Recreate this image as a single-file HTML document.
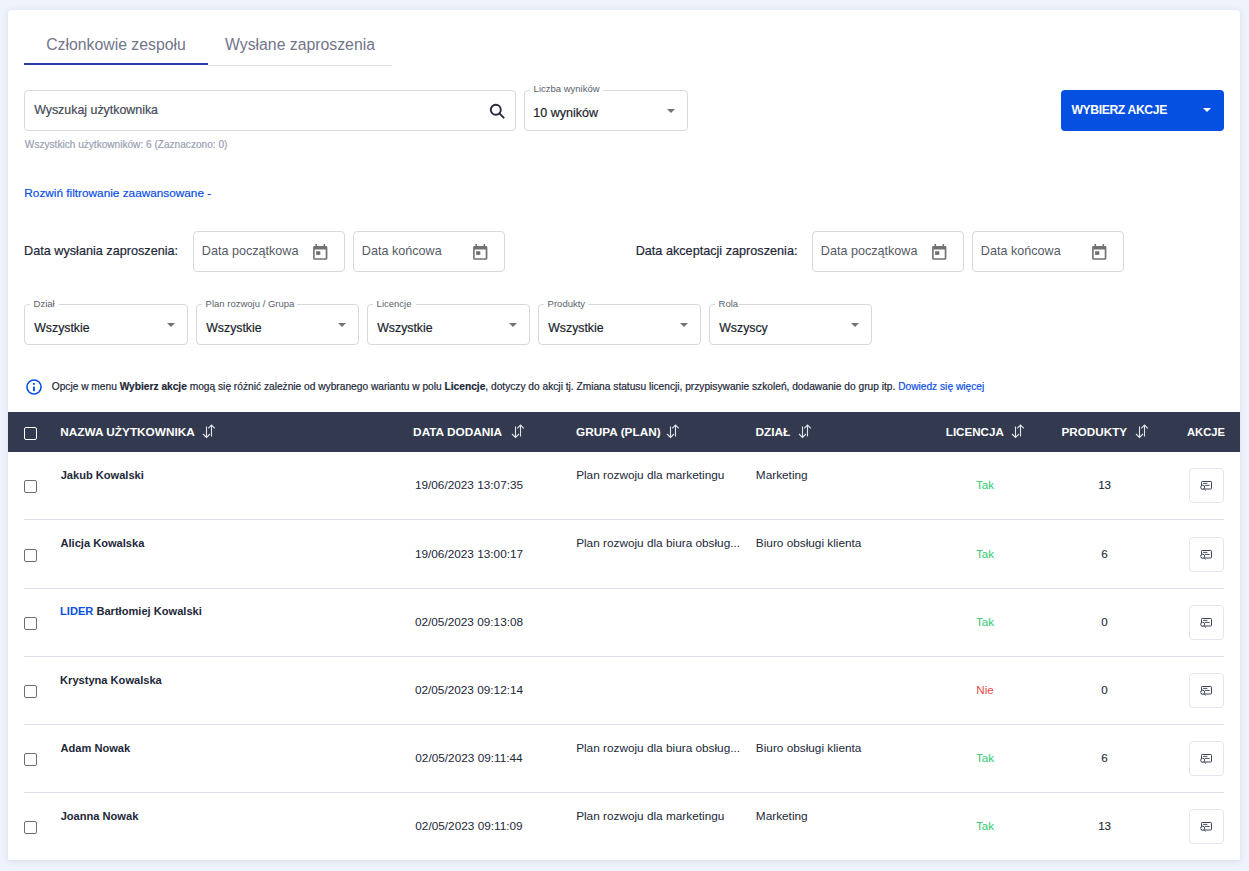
<!DOCTYPE html>
<html><head><meta charset="utf-8"><title>Członkowie zespołu</title>
<style>
html,body{margin:0;padding:0;}
body{width:1249px;height:871px;position:relative;overflow:hidden;background:#eff3fc;font-family:"Liberation Sans",sans-serif;}
.t{position:absolute;white-space:nowrap;line-height:1;}
.m{-webkit-text-stroke:0.2px currentColor;}
b{font-weight:700;}
</style></head><body>
<div style="position:absolute;left:8px;top:10px;width:1232px;height:850px;background:#fff;border-radius:4px 4px 0 0;box-shadow:0 1px 7px rgba(60,70,130,0.13);"></div>
<div class="t" style="left:24px;width:184px;text-align:center;top:37px;font-size:15.8px;font-weight:400;color:#72768a;">Członkowie zespołu</div>
<div class="t" style="left:208px;width:184px;text-align:center;top:37px;font-size:15.8px;font-weight:400;color:#72768a;">Wysłane zaproszenia</div>
<div style="position:absolute;left:208px;top:65px;width:184px;height:1px;background:#dedede;"></div>
<div style="position:absolute;left:24px;top:63px;width:184px;height:2px;background:#283aaf;"></div>
<div style="position:absolute;left:24px;top:90px;width:492px;height:41px;box-sizing:border-box;border:1px solid #d9d9d9;border-radius:4px;"></div>
<div class="t m" style="left:34.15px;top:104px;font-size:12.4px;font-weight:400;color:#464b58;">Wyszukaj użytkownika</div>
<svg style="position:absolute;left:489px;top:103px" width="16" height="16" viewBox="0 0 16 16"><circle cx="6.8" cy="6.8" r="5" fill="none" stroke="#262c3d" stroke-width="1.9"/><line x1="10.4" y1="10.4" x2="14.6" y2="14.6" stroke="#262c3d" stroke-width="2" stroke-linecap="round"/></svg>
<div class="t m" style="left:24.86px;top:140px;font-size:10.1px;font-weight:400;color:#9a9fb3;">Wszystkich użytkowników: 6 (Zaznaczono: 0)</div>
<div style="position:absolute;left:524px;top:90px;width:164px;height:41px;box-sizing:border-box;border:1px solid #d9d9d9;border-radius:4px;"></div>
<div style="position:absolute;left:530px;top:88px;width:73px;height:4px;background:#fff;"></div>
<div class="t" style="left:533.62px;top:84px;font-size:9.5px;font-weight:400;color:#5a5f6c;">Liczba wyników</div>
<div class="t m" style="left:533.35px;top:107px;font-size:12.5px;font-weight:400;color:#1b1f2c;">10 wyników</div>
<div style="position:absolute;left:667px;top:109px;width:0;height:0;border-left:4px solid transparent;border-right:4px solid transparent;border-top:4px solid #737373;"></div>
<div style="position:absolute;left:1061px;top:90px;width:163px;height:41px;background:#0550e0;border-radius:4px;"></div>
<div class="t" style="left:1071.39px;top:104px;font-size:12.2px;font-weight:700;color:#fff;letter-spacing:-0.38px;">WYBIERZ AKCJE</div>
<div style="position:absolute;left:1203px;top:108px;width:0;height:0;border-left:4px solid transparent;border-right:4px solid transparent;border-top:4px solid #fff;"></div>
<div class="t m" style="left:24.33px;top:188px;font-size:11.8px;font-weight:400;color:#0a4fe6;">Rozwiń filtrowanie zaawansowane -</div>
<div class="t m" style="left:24.06px;top:245px;font-size:12.66px;font-weight:400;color:#222838;">Data wysłania zaproszenia:</div>
<div style="position:absolute;left:193px;top:231px;width:152px;height:41px;box-sizing:border-box;border:1px solid #d9d9d9;border-radius:4px;"></div>
<div class="t" style="left:201.87px;top:245px;font-size:12.6px;font-weight:400;color:#565a64;">Data początkowa</div>
<svg style="position:absolute;left:312.9px;top:243.8px" width="15" height="16" viewBox="0 0 15 16"><path fill="#727272" fill-rule="evenodd" d="M1.5 2H13a1.4 1.4 0 0 1 1.4 1.4V14.4A1.4 1.4 0 0 1 13 15.8H1.5A1.4 1.4 0 0 1 0.1 14.4V3.4A1.4 1.4 0 0 1 1.5 2ZM1.7 5.6V14.2H12.7V5.6Z"/><rect x="2.5" y="0" width="1.5" height="2.6" fill="#727272"/><rect x="10.6" y="0" width="1.5" height="2.6" fill="#727272"/><rect x="3.1" y="7.2" width="4.2" height="3.7" fill="#727272"/></svg>
<div style="position:absolute;left:353px;top:231px;width:152px;height:41px;box-sizing:border-box;border:1px solid #d9d9d9;border-radius:4px;"></div>
<div class="t" style="left:361.87px;top:245px;font-size:12.6px;font-weight:400;color:#565a64;">Data końcowa</div>
<svg style="position:absolute;left:472.9px;top:243.8px" width="15" height="16" viewBox="0 0 15 16"><path fill="#727272" fill-rule="evenodd" d="M1.5 2H13a1.4 1.4 0 0 1 1.4 1.4V14.4A1.4 1.4 0 0 1 13 15.8H1.5A1.4 1.4 0 0 1 0.1 14.4V3.4A1.4 1.4 0 0 1 1.5 2ZM1.7 5.6V14.2H12.7V5.6Z"/><rect x="2.5" y="0" width="1.5" height="2.6" fill="#727272"/><rect x="10.6" y="0" width="1.5" height="2.6" fill="#727272"/><rect x="3.1" y="7.2" width="4.2" height="3.7" fill="#727272"/></svg>
<div class="t m" style="left:635.66px;top:245px;font-size:12.66px;font-weight:400;color:#222838;">Data akceptacji zaproszenia:</div>
<div style="position:absolute;left:812px;top:231px;width:152px;height:41px;box-sizing:border-box;border:1px solid #d9d9d9;border-radius:4px;"></div>
<div class="t" style="left:820.87px;top:245px;font-size:12.6px;font-weight:400;color:#565a64;">Data początkowa</div>
<svg style="position:absolute;left:931.9px;top:243.8px" width="15" height="16" viewBox="0 0 15 16"><path fill="#727272" fill-rule="evenodd" d="M1.5 2H13a1.4 1.4 0 0 1 1.4 1.4V14.4A1.4 1.4 0 0 1 13 15.8H1.5A1.4 1.4 0 0 1 0.1 14.4V3.4A1.4 1.4 0 0 1 1.5 2ZM1.7 5.6V14.2H12.7V5.6Z"/><rect x="2.5" y="0" width="1.5" height="2.6" fill="#727272"/><rect x="10.6" y="0" width="1.5" height="2.6" fill="#727272"/><rect x="3.1" y="7.2" width="4.2" height="3.7" fill="#727272"/></svg>
<div style="position:absolute;left:972px;top:231px;width:152px;height:41px;box-sizing:border-box;border:1px solid #d9d9d9;border-radius:4px;"></div>
<div class="t" style="left:980.87px;top:245px;font-size:12.6px;font-weight:400;color:#565a64;">Data końcowa</div>
<svg style="position:absolute;left:1091.9px;top:243.8px" width="15" height="16" viewBox="0 0 15 16"><path fill="#727272" fill-rule="evenodd" d="M1.5 2H13a1.4 1.4 0 0 1 1.4 1.4V14.4A1.4 1.4 0 0 1 13 15.8H1.5A1.4 1.4 0 0 1 0.1 14.4V3.4A1.4 1.4 0 0 1 1.5 2ZM1.7 5.6V14.2H12.7V5.6Z"/><rect x="2.5" y="0" width="1.5" height="2.6" fill="#727272"/><rect x="10.6" y="0" width="1.5" height="2.6" fill="#727272"/><rect x="3.1" y="7.2" width="4.2" height="3.7" fill="#727272"/></svg>
<div style="position:absolute;left:24px;top:304px;width:164px;height:41px;box-sizing:border-box;border:1px solid #d9d9d9;border-radius:4px;"></div>
<div style="position:absolute;left:30px;top:302px;width:29px;height:4px;background:#fff;"></div>
<div class="t" style="left:33.62px;top:299px;font-size:9.5px;font-weight:400;color:#5a5f6c;">Dział</div>
<div class="t m" style="left:34.25px;top:322px;font-size:12.3px;font-weight:400;color:#1b1f2c;">Wszystkie</div>
<div style="position:absolute;left:167px;top:323px;width:0;height:0;border-left:4px solid transparent;border-right:4px solid transparent;border-top:4px solid #737373;"></div>
<div style="position:absolute;left:196px;top:304px;width:163px;height:41px;box-sizing:border-box;border:1px solid #d9d9d9;border-radius:4px;"></div>
<div style="position:absolute;left:202px;top:302px;width:95px;height:4px;background:#fff;"></div>
<div class="t" style="left:205.62px;top:299px;font-size:9.5px;font-weight:400;color:#5a5f6c;">Plan rozwoju / Grupa</div>
<div class="t m" style="left:206.25px;top:322px;font-size:12.3px;font-weight:400;color:#1b1f2c;">Wszystkie</div>
<div style="position:absolute;left:338px;top:323px;width:0;height:0;border-left:4px solid transparent;border-right:4px solid transparent;border-top:4px solid #737373;"></div>
<div style="position:absolute;left:367px;top:304px;width:163px;height:41px;box-sizing:border-box;border:1px solid #d9d9d9;border-radius:4px;"></div>
<div style="position:absolute;left:373px;top:302px;width:43px;height:4px;background:#fff;"></div>
<div class="t" style="left:376.62px;top:299px;font-size:9.5px;font-weight:400;color:#5a5f6c;">Licencje</div>
<div class="t m" style="left:377.25px;top:322px;font-size:12.3px;font-weight:400;color:#1b1f2c;">Wszystkie</div>
<div style="position:absolute;left:509px;top:323px;width:0;height:0;border-left:4px solid transparent;border-right:4px solid transparent;border-top:4px solid #737373;"></div>
<div style="position:absolute;left:538px;top:304px;width:163px;height:41px;box-sizing:border-box;border:1px solid #d9d9d9;border-radius:4px;"></div>
<div style="position:absolute;left:544px;top:302px;width:44px;height:4px;background:#fff;"></div>
<div class="t" style="left:547.62px;top:299px;font-size:9.5px;font-weight:400;color:#5a5f6c;">Produkty</div>
<div class="t m" style="left:548.25px;top:322px;font-size:12.3px;font-weight:400;color:#1b1f2c;">Wszystkie</div>
<div style="position:absolute;left:680px;top:323px;width:0;height:0;border-left:4px solid transparent;border-right:4px solid transparent;border-top:4px solid #737373;"></div>
<div style="position:absolute;left:709px;top:304px;width:163px;height:41px;box-sizing:border-box;border:1px solid #d9d9d9;border-radius:4px;"></div>
<div style="position:absolute;left:715px;top:302px;width:24px;height:4px;background:#fff;"></div>
<div class="t" style="left:718.62px;top:299px;font-size:9.5px;font-weight:400;color:#5a5f6c;">Rola</div>
<div class="t m" style="left:719.25px;top:322px;font-size:12.3px;font-weight:400;color:#1b1f2c;">Wszyscy</div>
<div style="position:absolute;left:851px;top:323px;width:0;height:0;border-left:4px solid transparent;border-right:4px solid transparent;border-top:4px solid #737373;"></div>
<svg style="position:absolute;left:26.1px;top:378.7px" width="16" height="16" viewBox="0 0 16 16"><circle cx="8" cy="8" r="7.05" fill="none" stroke="#0a4fe6" stroke-width="1.6"/><rect x="7" y="4.05" width="1.9" height="1.7" fill="#0a4fe6"/><rect x="7" y="7.65" width="1.9" height="4.5" fill="#0a4fe6"/></svg>
<div class="t m" style="left:51.72px;top:382px;font-size:10.2px;font-weight:400;color:#222838;">Opcje w menu <b>Wybierz akcje</b> mogą się różnić zależnie od wybranego wariantu w polu <b>Licencje</b>, dotyczy do akcji tj. Zmiana statusu licencji, przypisywanie szkoleń, dodawanie do grup itp. <span style="color:#0a4fe6">Dowiedz się więcej</span></div>
<div style="position:absolute;left:8px;top:412px;width:1232px;height:40px;background:#333a4f;"></div>
<div style="position:absolute;left:24px;top:426.5px;width:13px;height:13px;box-sizing:border-box;border:1.5px solid #fff;border-radius:2px;"></div>
<div class="t" style="left:60.21px;top:427px;font-size:11.8px;font-weight:700;color:#fff;">NAZWA UŻYTKOWNIKA</div>
<svg style="position:absolute;left:202px;top:424px" width="14" height="15" viewBox="0 0 14 15"><path d="M4.5 2.5V13.5M1 10L4.5 13.5L8 10" fill="none" stroke="#e2e4ea" stroke-width="1.1"/><path d="M9.5 12.6V1.2M6.2 4.4L9.5 1.1L12.8 4.4" fill="none" stroke="#e2e4ea" stroke-width="1.1"/></svg>
<div class="t" style="left:413.11px;top:427px;font-size:11.8px;font-weight:700;color:#fff;">DATA DODANIA</div>
<svg style="position:absolute;left:511px;top:424px" width="14" height="15" viewBox="0 0 14 15"><path d="M4.5 2.5V13.5M1 10L4.5 13.5L8 10" fill="none" stroke="#e2e4ea" stroke-width="1.1"/><path d="M9.5 12.6V1.2M6.2 4.4L9.5 1.1L12.8 4.4" fill="none" stroke="#e2e4ea" stroke-width="1.1"/></svg>
<div class="t" style="left:576.12px;top:427px;font-size:11.8px;font-weight:700;color:#fff;">GRUPA (PLAN)</div>
<svg style="position:absolute;left:666px;top:424px" width="14" height="15" viewBox="0 0 14 15"><path d="M4.5 2.5V13.5M1 10L4.5 13.5L8 10" fill="none" stroke="#e2e4ea" stroke-width="1.1"/><path d="M9.5 12.6V1.2M6.2 4.4L9.5 1.1L12.8 4.4" fill="none" stroke="#e2e4ea" stroke-width="1.1"/></svg>
<div class="t" style="left:755.51px;top:427px;font-size:11.8px;font-weight:700;color:#fff;">DZIAŁ</div>
<svg style="position:absolute;left:798px;top:424px" width="14" height="15" viewBox="0 0 14 15"><path d="M4.5 2.5V13.5M1 10L4.5 13.5L8 10" fill="none" stroke="#e2e4ea" stroke-width="1.1"/><path d="M9.5 12.6V1.2M6.2 4.4L9.5 1.1L12.8 4.4" fill="none" stroke="#e2e4ea" stroke-width="1.1"/></svg>
<div class="t" style="left:945.82px;top:426px;font-size:11.6px;font-weight:700;color:#fff;">LICENCJA</div>
<svg style="position:absolute;left:1011px;top:424px" width="14" height="15" viewBox="0 0 14 15"><path d="M4.5 2.5V13.5M1 10L4.5 13.5L8 10" fill="none" stroke="#e2e4ea" stroke-width="1.1"/><path d="M9.5 12.6V1.2M6.2 4.4L9.5 1.1L12.8 4.4" fill="none" stroke="#e2e4ea" stroke-width="1.1"/></svg>
<div class="t" style="left:1061.52px;top:426px;font-size:11.7px;font-weight:700;color:#fff;">PRODUKTY</div>
<svg style="position:absolute;left:1135px;top:424px" width="14" height="15" viewBox="0 0 14 15"><path d="M4.5 2.5V13.5M1 10L4.5 13.5L8 10" fill="none" stroke="#e2e4ea" stroke-width="1.1"/><path d="M9.5 12.6V1.2M6.2 4.4L9.5 1.1L12.8 4.4" fill="none" stroke="#e2e4ea" stroke-width="1.1"/></svg>
<div class="t" style="left:1187.02px;top:427px;font-size:11.2px;font-weight:700;color:#fff;">AKCJE</div>
<div style="position:absolute;left:24px;top:480px;width:13px;height:13px;box-sizing:border-box;border:1.5px solid #6e6e6e;border-radius:2px;"></div>
<div class="t" style="left:60.63px;top:470px;font-size:11.1px;font-weight:700;color:#222838;">Jakub Kowalski</div>
<div class="t" style="left:395px;width:148px;text-align:center;top:480px;font-size:11.8px;font-weight:400;color:#222838;">19/06/2023 13:07:35</div>
<div class="t" style="left:576.13px;top:470px;font-size:11.8px;font-weight:400;color:#222838;">Plan rozwoju dla marketingu</div>
<div class="t" style="left:755.83px;top:470px;font-size:11.8px;font-weight:400;color:#222838;">Marketing</div>
<div class="t" style="left:935px;width:100px;text-align:center;top:479px;font-size:11.6px;font-weight:400;color:#2ecc71;">Tak</div>
<div class="t" style="left:1054.6px;width:100.0px;text-align:center;top:479px;font-size:11.6px;font-weight:400;color:#222838;-webkit-text-stroke:0.1px currentColor;">13</div>
<div style="position:absolute;left:1189px;top:468px;width:35px;height:35px;box-sizing:border-box;border:1px solid #e3e6f0;border-radius:4px;"></div>
<svg style="position:absolute;left:1199px;top:479px" width="16" height="14" viewBox="0 0 16 14"><rect x="2.5" y="2.5" width="10" height="7.5" rx="0.8" fill="none" stroke="#3b4253" stroke-width="1"/><line x1="4.1" y1="4.4" x2="8.3" y2="4.4" stroke="#3b4253" stroke-width="0.95"/><line x1="6.1" y1="6.4" x2="10.6" y2="6.4" stroke="#3b4253" stroke-width="0.95"/><circle cx="3.7" cy="8.2" r="2" fill="#fff" stroke="#3b4253" stroke-width="1"/><path d="M5.8 10.4L6.5 11.6" stroke="#3b4253" stroke-width="0.9"/></svg>
<div style="position:absolute;left:24px;top:519px;width:1200px;height:1px;background:#dfe1ec;"></div>
<div style="position:absolute;left:24px;top:549px;width:13px;height:13px;box-sizing:border-box;border:1.5px solid #6e6e6e;border-radius:2px;"></div>
<div class="t" style="left:60.52px;top:538px;font-size:11.1px;font-weight:700;color:#222838;">Alicja Kowalska</div>
<div class="t" style="left:395px;width:148px;text-align:center;top:549px;font-size:11.8px;font-weight:400;color:#222838;">19/06/2023 13:00:17</div>
<div class="t" style="left:576.13px;top:538px;font-size:11.8px;font-weight:400;color:#222838;">Plan rozwoju dla biura obsług...</div>
<div class="t" style="left:755.83px;top:538px;font-size:11.8px;font-weight:400;color:#222838;">Biuro obsługi klienta</div>
<div class="t" style="left:935px;width:100px;text-align:center;top:548px;font-size:11.6px;font-weight:400;color:#2ecc71;">Tak</div>
<div class="t" style="left:1054.6px;width:100.0px;text-align:center;top:548px;font-size:11.6px;font-weight:400;color:#222838;-webkit-text-stroke:0.1px currentColor;">6</div>
<div style="position:absolute;left:1189px;top:537px;width:35px;height:35px;box-sizing:border-box;border:1px solid #e3e6f0;border-radius:4px;"></div>
<svg style="position:absolute;left:1199px;top:548px" width="16" height="14" viewBox="0 0 16 14"><rect x="2.5" y="2.5" width="10" height="7.5" rx="0.8" fill="none" stroke="#3b4253" stroke-width="1"/><line x1="4.1" y1="4.4" x2="8.3" y2="4.4" stroke="#3b4253" stroke-width="0.95"/><line x1="6.1" y1="6.4" x2="10.6" y2="6.4" stroke="#3b4253" stroke-width="0.95"/><circle cx="3.7" cy="8.2" r="2" fill="#fff" stroke="#3b4253" stroke-width="1"/><path d="M5.8 10.4L6.5 11.6" stroke="#3b4253" stroke-width="0.9"/></svg>
<div style="position:absolute;left:24px;top:588px;width:1200px;height:1px;background:#dfe1ec;"></div>
<div style="position:absolute;left:24px;top:617px;width:13px;height:13px;box-sizing:border-box;border:1.5px solid #6e6e6e;border-radius:2px;"></div>
<div class="t" style="left:60.06px;top:606px;font-size:11.1px;font-weight:700;color:#222838;"><span style="color:#0a4fe6">LIDER</span> Bartłomiej Kowalski</div>
<div class="t" style="left:395px;width:148px;text-align:center;top:617px;font-size:11.8px;font-weight:400;color:#222838;">02/05/2023 09:13:08</div>
<div class="t" style="left:935px;width:100px;text-align:center;top:616px;font-size:11.6px;font-weight:400;color:#2ecc71;">Tak</div>
<div class="t" style="left:1054.6px;width:100.0px;text-align:center;top:616px;font-size:11.6px;font-weight:400;color:#222838;-webkit-text-stroke:0.1px currentColor;">0</div>
<div style="position:absolute;left:1189px;top:605px;width:35px;height:35px;box-sizing:border-box;border:1px solid #e3e6f0;border-radius:4px;"></div>
<svg style="position:absolute;left:1199px;top:616px" width="16" height="14" viewBox="0 0 16 14"><rect x="2.5" y="2.5" width="10" height="7.5" rx="0.8" fill="none" stroke="#3b4253" stroke-width="1"/><line x1="4.1" y1="4.4" x2="8.3" y2="4.4" stroke="#3b4253" stroke-width="0.95"/><line x1="6.1" y1="6.4" x2="10.6" y2="6.4" stroke="#3b4253" stroke-width="0.95"/><circle cx="3.7" cy="8.2" r="2" fill="#fff" stroke="#3b4253" stroke-width="1"/><path d="M5.8 10.4L6.5 11.6" stroke="#3b4253" stroke-width="0.9"/></svg>
<div style="position:absolute;left:24px;top:656px;width:1200px;height:1px;background:#dfe1ec;"></div>
<div style="position:absolute;left:24px;top:685px;width:13px;height:13px;box-sizing:border-box;border:1.5px solid #6e6e6e;border-radius:2px;"></div>
<div class="t" style="left:60.06px;top:675px;font-size:11.1px;font-weight:700;color:#222838;">Krystyna Kowalska</div>
<div class="t" style="left:395px;width:148px;text-align:center;top:685px;font-size:11.8px;font-weight:400;color:#222838;">02/05/2023 09:12:14</div>
<div class="t" style="left:935px;width:100px;text-align:center;top:684px;font-size:11.6px;font-weight:400;color:#e84a4a;">Nie</div>
<div class="t" style="left:1054.6px;width:100.0px;text-align:center;top:684px;font-size:11.6px;font-weight:400;color:#222838;-webkit-text-stroke:0.1px currentColor;">0</div>
<div style="position:absolute;left:1189px;top:673px;width:35px;height:35px;box-sizing:border-box;border:1px solid #e3e6f0;border-radius:4px;"></div>
<svg style="position:absolute;left:1199px;top:684px" width="16" height="14" viewBox="0 0 16 14"><rect x="2.5" y="2.5" width="10" height="7.5" rx="0.8" fill="none" stroke="#3b4253" stroke-width="1"/><line x1="4.1" y1="4.4" x2="8.3" y2="4.4" stroke="#3b4253" stroke-width="0.95"/><line x1="6.1" y1="6.4" x2="10.6" y2="6.4" stroke="#3b4253" stroke-width="0.95"/><circle cx="3.7" cy="8.2" r="2" fill="#fff" stroke="#3b4253" stroke-width="1"/><path d="M5.8 10.4L6.5 11.6" stroke="#3b4253" stroke-width="0.9"/></svg>
<div style="position:absolute;left:24px;top:724px;width:1200px;height:1px;background:#dfe1ec;"></div>
<div style="position:absolute;left:24px;top:753px;width:13px;height:13px;box-sizing:border-box;border:1.5px solid #6e6e6e;border-radius:2px;"></div>
<div class="t" style="left:60.52px;top:743px;font-size:11.1px;font-weight:700;color:#222838;">Adam Nowak</div>
<div class="t" style="left:395px;width:148px;text-align:center;top:753px;font-size:11.8px;font-weight:400;color:#222838;">02/05/2023 09:11:44</div>
<div class="t" style="left:576.13px;top:743px;font-size:11.8px;font-weight:400;color:#222838;">Plan rozwoju dla biura obsług...</div>
<div class="t" style="left:755.83px;top:743px;font-size:11.8px;font-weight:400;color:#222838;">Biuro obsługi klienta</div>
<div class="t" style="left:935px;width:100px;text-align:center;top:752px;font-size:11.6px;font-weight:400;color:#2ecc71;">Tak</div>
<div class="t" style="left:1054.6px;width:100.0px;text-align:center;top:752px;font-size:11.6px;font-weight:400;color:#222838;-webkit-text-stroke:0.1px currentColor;">6</div>
<div style="position:absolute;left:1189px;top:741px;width:35px;height:35px;box-sizing:border-box;border:1px solid #e3e6f0;border-radius:4px;"></div>
<svg style="position:absolute;left:1199px;top:752px" width="16" height="14" viewBox="0 0 16 14"><rect x="2.5" y="2.5" width="10" height="7.5" rx="0.8" fill="none" stroke="#3b4253" stroke-width="1"/><line x1="4.1" y1="4.4" x2="8.3" y2="4.4" stroke="#3b4253" stroke-width="0.95"/><line x1="6.1" y1="6.4" x2="10.6" y2="6.4" stroke="#3b4253" stroke-width="0.95"/><circle cx="3.7" cy="8.2" r="2" fill="#fff" stroke="#3b4253" stroke-width="1"/><path d="M5.8 10.4L6.5 11.6" stroke="#3b4253" stroke-width="0.9"/></svg>
<div style="position:absolute;left:24px;top:792px;width:1200px;height:1px;background:#dfe1ec;"></div>
<div style="position:absolute;left:24px;top:821px;width:13px;height:13px;box-sizing:border-box;border:1.5px solid #6e6e6e;border-radius:2px;"></div>
<div class="t" style="left:60.63px;top:811px;font-size:11.1px;font-weight:700;color:#222838;">Joanna Nowak</div>
<div class="t" style="left:395px;width:148px;text-align:center;top:821px;font-size:11.8px;font-weight:400;color:#222838;">02/05/2023 09:11:09</div>
<div class="t" style="left:576.13px;top:811px;font-size:11.8px;font-weight:400;color:#222838;">Plan rozwoju dla marketingu</div>
<div class="t" style="left:755.83px;top:811px;font-size:11.8px;font-weight:400;color:#222838;">Marketing</div>
<div class="t" style="left:935px;width:100px;text-align:center;top:820px;font-size:11.6px;font-weight:400;color:#2ecc71;">Tak</div>
<div class="t" style="left:1054.6px;width:100.0px;text-align:center;top:820px;font-size:11.6px;font-weight:400;color:#222838;-webkit-text-stroke:0.1px currentColor;">13</div>
<div style="position:absolute;left:1189px;top:809px;width:35px;height:35px;box-sizing:border-box;border:1px solid #e3e6f0;border-radius:4px;"></div>
<svg style="position:absolute;left:1199px;top:820px" width="16" height="14" viewBox="0 0 16 14"><rect x="2.5" y="2.5" width="10" height="7.5" rx="0.8" fill="none" stroke="#3b4253" stroke-width="1"/><line x1="4.1" y1="4.4" x2="8.3" y2="4.4" stroke="#3b4253" stroke-width="0.95"/><line x1="6.1" y1="6.4" x2="10.6" y2="6.4" stroke="#3b4253" stroke-width="0.95"/><circle cx="3.7" cy="8.2" r="2" fill="#fff" stroke="#3b4253" stroke-width="1"/><path d="M5.8 10.4L6.5 11.6" stroke="#3b4253" stroke-width="0.9"/></svg>
</body></html>
